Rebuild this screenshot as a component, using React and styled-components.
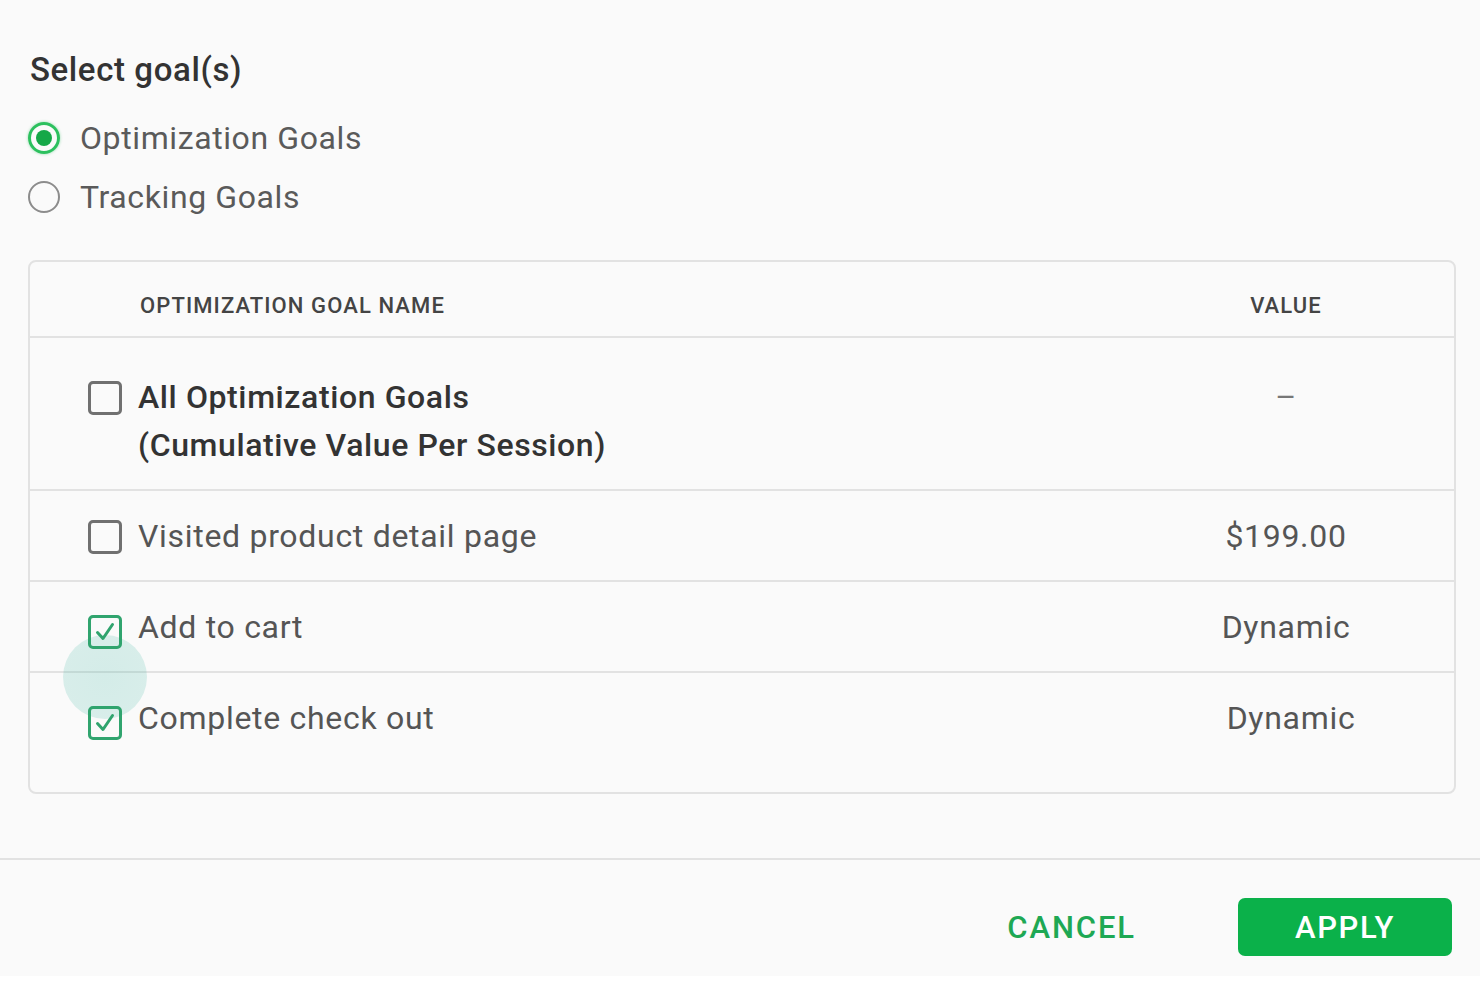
import React from "react";
import styled, { createGlobalStyle } from "styled-components";

const GlobalStyle = createGlobalStyle`
  html, body {
    margin: 0;
    padding: 0;
    background: #ffffff;
    font-family: Roboto, "Liberation Sans", Arial, sans-serif;
  }
`;

const Dialog = styled.div`
  width: 1480px;
  height: 976px;
  background: #fafafa;
  display: flex;
  flex-direction: column;
`;

const Body = styled.div`
  padding: 51px 24px 0 28px;
  display: flex;
  flex-direction: column;
`;

const Title = styled.h2`
  margin: 0 0 0 2px;
  font-size: 33px;
  line-height: 37px;
  font-weight: 500;
  letter-spacing: 0.6px;
  color: #333;
`;

const RadioGroup = styled.div`
  display: flex;
  flex-direction: column;
  gap: 15px;
  margin-top: 28px;
`;

const RadioRow = styled.label`
  display: flex;
  align-items: center;
  gap: 20px;
  height: 44px;
  font-size: 32px;
  letter-spacing: 0.6px;
  color: #5a5a5a;
`;

const RadioDot = styled.span`
  width: 32px;
  height: 32px;
  box-sizing: border-box;
  border-radius: 50%;
  border: ${(p) => (p.checked ? "3px solid #2cc05e" : "2.5px solid #8c8c8c")};
  display: flex;
  align-items: center;
  justify-content: center;
  box-shadow: ${(p) => (p.checked ? "0 0 3px rgba(29,185,84,0.45)" : "none")};

  &::after {
    content: "";
    width: 16px;
    height: 16px;
    border-radius: 50%;
    background: ${(p) => (p.checked ? "#15a848" : "transparent")};
  }
`;

const Table = styled.div`
  margin-top: 41px;
  border: 2px solid #e2e2e2;
  border-radius: 8px;
  padding-bottom: 30px;
`;

const Row = styled.div`
  display: grid;
  grid-template-columns: 34px 1fr 260px;
  column-gap: 16px;
  align-items: start;
  padding: ${(p) => (p.$first ? "35px" : "21px")} 38px 20px 58px;
  border-top: 2px solid #e2e2e2;
  font-size: 32px;
  line-height: 48px;
  letter-spacing: 0.7px;
  color: #555;
`;

const HeaderRow = styled.div`
  display: grid;
  grid-template-columns: 34px 1fr 260px;
  column-gap: 18px;
  align-items: center;
  height: 74px;
  padding: 0 38px 0 58px;
  font-size: 22px;
  font-weight: 500;
  letter-spacing: 1.1px;
  color: #444;
  text-transform: uppercase;
`;

const HeadCell = styled.div`
  grid-column: ${(p) => p.col};
  text-align: ${(p) => p.align || "left"};
  padding-top: 12px;
`;

const Name = styled.div`
  font-weight: ${(p) => (p.strong ? 500 : 400)};
  color: ${(p) => (p.strong ? "#333" : "#555")};
  letter-spacing: ${(p) => (p.strong ? "0.6px" : "0.7px")};
`;

const Value = styled.div`
  text-align: center;
  padding-left: ${(p) => p.shift || 0}px;
  color: ${(p) => (p.dim ? "#777" : "#555")};
`;

const BoxWrap = styled.div`
  position: relative;
  width: 34px;
  height: 34px;
  margin-top: ${(p) => (p.checked ? 12 : 8)}px;
`;

const Box = styled.span`
  position: relative;
  z-index: 1;
  display: flex;
  align-items: center;
  justify-content: center;
  width: 34px;
  height: 34px;
  box-sizing: border-box;
  border-radius: 5px;
  border: 3px solid ${(p) => (p.checked ? "#30a46e" : "#707070")};
  background: transparent;
`;

const Ripple = styled.span`
  position: absolute;
  left: -25px;
  top: 20px;
  width: 84px;
  height: 84px;
  border-radius: 50%;
  background: radial-gradient(
    circle,
    rgba(60, 180, 160, 0.2) 0%,
    rgba(60, 180, 160, 0.18) 70%,
    rgba(60, 180, 160, 0) 100%
  );
`;

const Divider = styled.div`
  margin-top: 64px;
  height: 2px;
  background: #e2e2e2;
`;

const Footer = styled.div`
  display: flex;
  justify-content: flex-end;
  align-items: center;
  padding: 38px 28px 0 0;
  gap: 102px;
`;

const CancelButton = styled.button`
  border: none;
  background: none;
  padding: 0;
  font-family: inherit;
  font-size: 31px;
  font-weight: 500;
  color: #1ea854;
  letter-spacing: 1.9px;
`;

const ApplyButton = styled.button`
  width: 214px;
  height: 58px;
  border: none;
  border-radius: 7px;
  background: #0bb14a;
  color: #fff;
  font-family: inherit;
  font-size: 31px;
  font-weight: 500;
  letter-spacing: 1.6px;
`;

const Check = ({ checked, ripple }) => (
  <BoxWrap checked={checked}>
    {ripple && <Ripple />}
    <Box checked={checked}>
      {checked && (
        <svg width="24" height="24" viewBox="0 0 24 24" fill="none">
          <path
            d="M4.5 12.5l5.5 6L19.5 4.5"
            stroke="#30a46e"
            strokeWidth="3"
            strokeLinecap="round"
            strokeLinejoin="round"
          />
        </svg>
      )}
    </Box>
  </BoxWrap>
);

const goals = [
  { name: "Visited product detail page", value: "$199.00" },
  { name: "Add to cart", value: "Dynamic", checked: true, ripple: true },
  { name: "Complete check out", value: "Dynamic", checked: true, shift: 10 },
];

export default function App() {
  return (
    <>
      <GlobalStyle />
      <Dialog>
        <Body>
          <Title>Select goal(s)</Title>
          <RadioGroup>
            <RadioRow>
              <RadioDot checked />
              Optimization Goals
            </RadioRow>
            <RadioRow>
              <RadioDot />
              Tracking Goals
            </RadioRow>
          </RadioGroup>

          <Table>
            <HeaderRow>
              <HeadCell col="2">Optimization goal name</HeadCell>
              <HeadCell col="3" align="center">Value</HeadCell>
            </HeaderRow>
            <Row $first>
              <Check />
              <Name strong>
                All Optimization Goals
                <br />
                (Cumulative Value Per Session)
              </Name>
              <Value dim>–</Value>
            </Row>
            {goals.map((g) => (
              <Row key={g.name}>
                <Check checked={g.checked} ripple={g.ripple} />
                <Name>{g.name}</Name>
                <Value shift={g.shift}>{g.value}</Value>
              </Row>
            ))}
          </Table>
        </Body>
        <Divider />
        <Footer>
          <CancelButton>CANCEL</CancelButton>
          <ApplyButton>APPLY</ApplyButton>
        </Footer>
      </Dialog>
    </>
  );
}
